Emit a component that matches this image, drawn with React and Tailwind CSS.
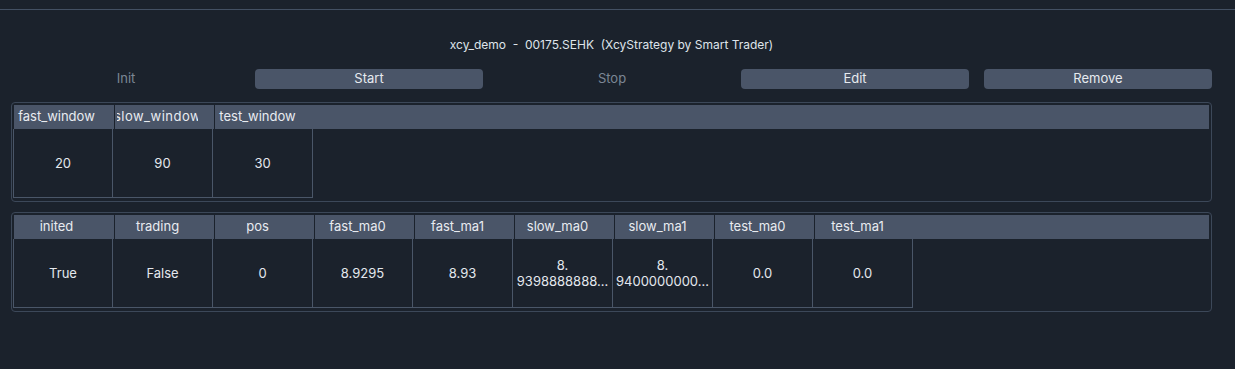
import React from "react";

const font = { fontFamily: "Inter, 'Noto Sans', 'Liberation Sans', sans-serif" };

function HeaderCell({ label, first, wide }) {
  return (
    <div
      className={`w-[100px] h-full shrink-0 flex items-center ${first ? "" : "border-l border-[#1b222c]"}`}
    >
      <div className="w-[81px] ml-[2px] flex justify-center overflow-hidden whitespace-nowrap">
        <span className={`shrink-0 ${wide ? "tracking-[0.5px]" : ""}`}>{label}</span>
      </div>
    </div>
  );
}

function DataCell({ children, first }) {
  return (
    <div
      className={`w-[100px] h-[69px] shrink-0 flex flex-col items-center justify-center text-center border-r border-b border-[#4a5668] leading-[16px] ${first ? "border-l" : ""}`}
    >
      {children}
    </div>
  );
}

function Table({ headers, values, wide = [] }) {
  return (
    <div className="ml-[11px] mr-[23px] border border-[#3c4859] rounded-[4px] p-[2px]">
      <div className="flex h-[24px] bg-[#4a5568] text-[13px] text-[#e8ebf0]">
        {headers.map((h, i) => (
          <HeaderCell key={i} label={h} first={i === 0} wide={wide.includes(i)} />
        ))}
        <div className="flex-1" />
      </div>
      <div className="flex text-[13px] text-[#e4e8ee] -ml-px">
        {values.map((v, i) => (
          <DataCell key={i} first={i === 0}>
            {Array.isArray(v) ? v.map((l, j) => <span key={j}>{l}</span>) : v}
          </DataCell>
        ))}
      </div>
      <div className="h-px" />
    </div>
  );
}

export default function App() {
  return (
    <div
      className="w-[1235px] h-[369px] bg-[#1b222c] overflow-hidden flex flex-col"
      style={font}
    >
      <div className="h-[9px]" />
      <div className="h-px bg-[#435063]" />
      <div className="mt-[27px] h-[16px] leading-[16px] text-center text-[12px] text-[#dfe4ea] whitespace-pre pr-[12px]">
        {"xcy_demo  -  00175.SEHK  (XcyStrategy by Smart Trader)"}
      </div>
      <div className="mt-[16px] ml-[12px] mr-[23px] grid grid-cols-5 gap-[15px] h-[19px] text-[13px]">
        <div className="flex items-center justify-center text-[#7c8795]">Init</div>
        <div className="flex items-center justify-center rounded-[4px] bg-[#4a5568] text-[#e6eaef]">Start</div>
        <div className="flex items-center justify-center text-[#7c8795]">Stop</div>
        <div className="flex items-center justify-center rounded-[4px] bg-[#4a5568] text-[#e6eaef]">Edit</div>
        <div className="flex items-center justify-center rounded-[4px] bg-[#4a5568] text-[#e6eaef]">Remove</div>
      </div>
      <div className="mt-[14px]">
        <Table
          headers={["fast_window", "slow_window", "test_window"]}
          values={["20", "90", "30"]}
          wide={[1]}
        />
      </div>
      <div className="mt-[10px]">
        <Table
          headers={["inited", "trading", "pos", "fast_ma0", "fast_ma1", "slow_ma0", "slow_ma1", "test_ma0", "test_ma1"]}
          values={[
            "True",
            "False",
            "0",
            "8.9295",
            "8.93",
            ["8.", "9398888888..."],
            ["8.", "9400000000..."],
            "0.0",
            "0.0",
          ]}
        />
      </div>
    </div>
  );
}
